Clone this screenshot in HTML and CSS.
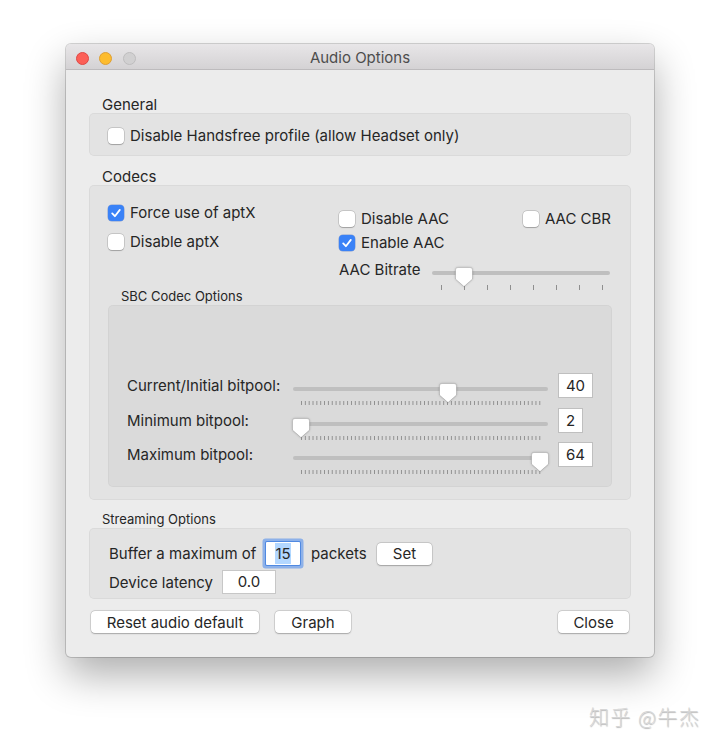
FILE: index.html
```html
<!DOCTYPE html>
<html lang="en">
<head>
  <meta charset="UTF-8">
  <title>Audio Options</title>
  <link rel="stylesheet" href="styles.css">
</head>
<body>

  <div class="window">
    <div class="titlebar">
      <div class="lights">
        <span class="light red"></span>
        <span class="light yellow"></span>
        <span class="light gray"></span>
      </div>
      <div class="title">Audio Options</div>
    </div>

    <div class="content">
      <div class="group-title">General</div>
      <div class="group general">
        <label class="check"><span class="box"></span>Disable Handsfree profile (allow Headset only)</label>
      </div>

      <div class="group-title codecs-title">Codecs</div>
      <div class="group codecs">
        <div class="codec-top">
          <div class="col-left">
            <label class="check"><span class="box on"><svg viewBox="0 0 16 16"><path d="M4.2 8.4 L6.9 11.2 L11.8 4.9"/></svg></span>Force use of aptX</label>
            <label class="check"><span class="box"></span>Disable aptX</label>
          </div>
          <div class="col-right">
            <div class="split">
              <label class="check"><span class="box"></span>Disable AAC</label>
              <label class="check"><span class="box"></span>AAC CBR</label>
            </div>
            <label class="check"><span class="box on"><svg viewBox="0 0 16 16"><path d="M4.2 8.4 L6.9 11.2 L11.8 4.9"/></svg></span>Enable AAC</label>
            <div class="bitrate">
              <span class="bitrate-label">AAC Bitrate</span>
              <div class="slider aac">
                <div class="track"></div>
                <div class="ticks"></div>
                <svg class="knob" style="left: 23px" viewBox="0 0 18 20"><path d="M3 0.5 H15 A2.5 2.5 0 0 1 17.5 3 V12 L9 19.5 L0.5 12 V3 A2.5 2.5 0 0 1 3 0.5 Z"/></svg>
              </div>
            </div>
          </div>
        </div>

        <div class="sub-title">SBC Codec Options</div>
        <div class="sbc">
          <div class="sbc-row">
            <span class="sbc-label">Current/Initial bitpool:</span>
            <div class="slider pool">
              <div class="track"></div>
              <div class="ticks"></div>
              <svg class="knob" style="left: 145.5px" viewBox="0 0 18 20"><path d="M3 0.5 H15 A2.5 2.5 0 0 1 17.5 3 V12 L9 19.5 L0.5 12 V3 A2.5 2.5 0 0 1 3 0.5 Z"/></svg>
            </div>
            <div class="field">40</div>
          </div>
          <div class="sbc-row">
            <span class="sbc-label">Minimum bitpool:</span>
            <div class="slider pool">
              <div class="track"></div>
              <div class="ticks"></div>
              <svg class="knob" style="left: -1px" viewBox="0 0 18 20"><path d="M3 0.5 H15 A2.5 2.5 0 0 1 17.5 3 V12 L9 19.5 L0.5 12 V3 A2.5 2.5 0 0 1 3 0.5 Z"/></svg>
            </div>
            <div class="field narrow">2</div>
          </div>
          <div class="sbc-row">
            <span class="sbc-label">Maximum bitpool:</span>
            <div class="slider pool">
              <div class="track"></div>
              <div class="ticks"></div>
              <svg class="knob" style="left: 238px" viewBox="0 0 18 20"><path d="M3 0.5 H15 A2.5 2.5 0 0 1 17.5 3 V12 L9 19.5 L0.5 12 V3 A2.5 2.5 0 0 1 3 0.5 Z"/></svg>
            </div>
            <div class="field">64</div>
          </div>
        </div>
      </div>

      <div class="sub-title stream-title">Streaming Options</div>
      <div class="group streaming">
        <div class="stream-row">
          <span class="buffer-label">Buffer a maximum of</span>
          <div class="field focus"><span class="selected">15</span></div>
          <span class="packets-label">packets</span>
          <button class="btn set">Set</button>
        </div>
        <div class="stream-row latency">
          <span class="latency-label">Device latency</span>
          <div class="field wide">0.0</div>
        </div>
      </div>

      <div class="actions">
        <button class="btn reset">Reset audio default</button>
        <button class="btn graph">Graph</button>
        <button class="btn close">Close</button>
      </div>
    </div>
  </div>

  <div class="watermark">知乎 @牛杰</div>

</body>
</html>
```

FILE: styles.css
```css
body {
  margin: 0;
  padding: 44px 0 0 66px;
  background: #fff;
  font-family: Inter, "Liberation Sans", Arial, sans-serif;
  font-size: 15px;
  color: #262626;
  height: 745px;
  box-sizing: border-box;
  overflow: hidden;
}

.window {
  width: 588px;
  background: #ececec;
  border-radius: 5px;
  box-shadow: 0 0 0 1px rgba(0, 0, 0, 0.16), 0 18px 40px rgba(0, 0, 0, 0.32);
  overflow: hidden;
}

.titlebar {
  position: relative;
  height: 25px;
  background: linear-gradient(#e8e6e8, #d4d2d4);
  border-bottom: 1px solid #bdbbbd;
  display: flex;
  align-items: center;
  justify-content: center;
}

.lights {
  position: absolute;
  left: 9.5px;
  top: 7.5px;
  display: flex;
  gap: 10.5px;
}

.light {
  width: 13px;
  height: 13px;
  border-radius: 50%;
  box-sizing: border-box;
}

.red { background: #fc5f57; border: 0.5px solid #df4744; }
.yellow { background: #fdbc2e; border: 0.5px solid #de9f34; }
.gray { background: #d1d0d1; border: 0.5px solid #bebdbe; }

.title {
  color: #4d4d4d;
  font-size: 15px;
  line-height: 18px;
  margin-top: 2px;
}

.content {
  padding: 0 23px 24px;
}

.group-title {
  margin-top: 25px;
  padding-left: 13px;
  line-height: 18px;
  padding-top: 1px;
  height: 18px;
  box-sizing: border-box;
}

.codecs-title {
  margin-top: 11px;
}

.sub-title {
  font-size: 13px;
  line-height: 18px;
  padding-left: 32px;
}

.stream-title {
  margin-top: 10px;
  padding-left: 13px;
}

.group {
  background: #e3e3e3;
  border-radius: 5px;
  box-shadow: inset 0 0 0 1px rgba(0, 0, 0, 0.04);
}

.general {
  height: 43px;
  box-sizing: border-box;
  padding: 14px 19px 0;
}

.check {
  display: flex;
  align-items: center;
  height: 18px;
  line-height: 18px;
  white-space: nowrap;
}

.box {
  width: 16px;
  height: 16px;
  border-radius: 4px;
  background: #fff;
  box-shadow: 0 0 0 0.5px rgba(0, 0, 0, 0.22), 0 0.5px 1px rgba(0, 0, 0, 0.2);
  margin-right: 6px;
  flex: none;
  display: flex;
}

.box.on {
  background: #3a82f7;
  box-shadow: 0 0 0 0.5px rgba(0, 60, 180, 0.4);
}

.box svg {
  width: 16px;
  height: 16px;
  fill: none;
  stroke: #fff;
  stroke-width: 1.8;
  stroke-linecap: round;
  stroke-linejoin: round;
}

.codecs {
  height: 315px;
  box-sizing: border-box;
}

.codec-top {
  height: 102px;
  display: flex;
}

.col-left {
  width: 231px;
  padding: 19px 0 0 19px;
  display: flex;
  flex-direction: column;
  gap: 11px;
}

.col-right {
  width: 272px;
  padding-top: 25px;
  display: flex;
  flex-direction: column;
  gap: 6px;
}

.split {
  display: flex;
  justify-content: space-between;
}

.bitrate {
  display: flex;
  margin-top: 3px;
  height: 18px;
}

.bitrate-label {
  width: 93px;
  line-height: 18px;
}

.slider {
  position: relative;
}

.track {
  position: absolute;
  left: 0;
  right: 0;
  height: 4px;
  border-radius: 2px;
  background: #bfbfbf;
}

.ticks {
  position: absolute;
  background-image: linear-gradient(to right, #8f8f8f 1px, transparent 1px);
  background-repeat: repeat-x;
}

.knob {
  position: absolute;
  width: 18px;
  height: 20px;
  fill: #fff;
  stroke: rgba(0, 0, 0, 0.18);
  stroke-width: 0.8;
  filter: drop-shadow(0 0.5px 0.8px rgba(0, 0, 0, 0.25));
}

.slider.aac {
  width: 178px;
  height: 18px;
}

.aac .track { top: 10px; }
.aac .knob { top: 6px; }

.aac .ticks {
  left: 9px;
  top: 24px;
  width: 162px;
  height: 5px;
  background-size: 23px 5px;
}

.sbc {
  margin: 0 19px;
  height: 182px;
  box-sizing: border-box;
  padding: 69px 0 0 19px;
  background: #dadada;
  border-radius: 5px;
  box-shadow: inset 0 0 0 1px rgba(0, 0, 0, 0.03);
}

.sbc-row {
  display: flex;
  height: 34.5px;
}

.sbc-label {
  width: 166px;
  margin-top: 3px;
  line-height: 18px;
}

.slider.pool {
  width: 255px;
  height: 34px;
  margin-right: 11px;
}

.pool .track { top: 13px; }
.pool .knob { top: 9px; }

.pool .ticks {
  left: 8px;
  top: 27px;
  width: 240px;
  height: 4px;
  background-size: 3.855px 4px;
}

.field {
  width: 33px;
  height: 23px;
  box-sizing: border-box;
  background: #fff;
  box-shadow: 0 0 0 1px rgba(0, 0, 0, 0.12);
  text-align: center;
  line-height: 23px;
}

.field.narrow { width: 23px; }
.field.wide { width: 52px; }

.streaming {
  height: 71px;
  box-sizing: border-box;
  padding: 14px 0 0 20px;
}

.stream-row {
  display: flex;
  align-items: center;
  height: 23px;
}

.buffer-label { width: 157px; }
.packets-label { margin-left: 11px; width: 66px; }
.latency-label { width: 114px; }

.stream-row.latency {
  margin-top: 6px;
  height: 22px;
}

.stream-row.latency .field {
  height: 22px;
  line-height: 22px;
}

.field.focus {
  width: 34px;
  box-shadow: 0 0 0 1px rgba(40, 110, 220, 0.6), 0 0 0 3.5px rgba(112, 160, 235, 0.75);
  border-radius: 1px;
}

.selected {
  background: #b3d7ff;
  padding: 1px 0;
}

.btn {
  font-family: inherit;
  font-size: 15px;
  color: #262626;
  background: #fff;
  border: none;
  border-radius: 4px;
  height: 22px;
  padding: 0;
  box-shadow: 0 0 0 0.5px rgba(0, 0, 0, 0.18), 0 0.5px 1.5px rgba(0, 0, 0, 0.22);
}

.set {
  width: 55px;
}

.actions {
  margin-top: 12px;
  display: flex;
  padding: 0 2px;
}

.reset { width: 168px; }
.graph { width: 76px; margin-left: 16px; }
.close { width: 71px; margin-left: auto; }

.watermark {
  position: absolute;
  left: 589px;
  top: 702px;
  font-family: "Noto Sans CJK SC", sans-serif;
  font-size: 20px;
  font-weight: 300;
  color: #d6d6d6;
  text-shadow: 0.5px 1px 1px rgba(0, 0, 0, 0.28);
  letter-spacing: 1.5px;
}
```
